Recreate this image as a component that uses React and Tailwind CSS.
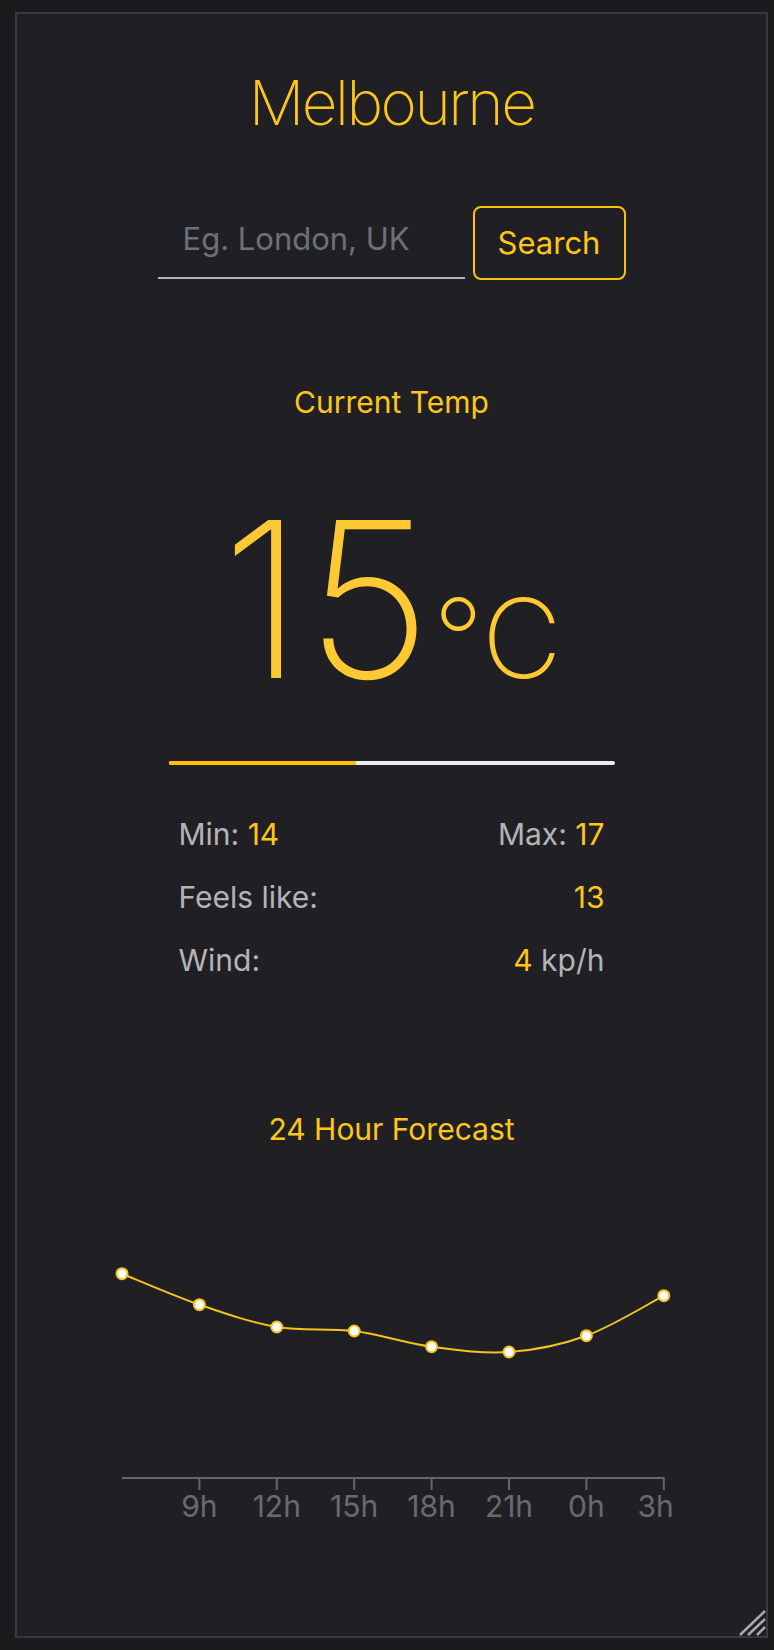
import React from 'react';

const stats = [
    { label: 'Min:', value: '14', right: { label: 'Max:', value: '17' } },
    { label: 'Feels like:', right: { value: '13' } },
    { label: 'Wind:', right: { value: '4', unit: 'kp/h' } },
];

// forecast points, already scaled to the chart box
const forecast = [
    { hour: '6h', y: 126.7 },
    { hour: '9h', y: 157.7 },
    { hour: '12h', y: 180 },
    { hour: '15h', y: 184 },
    { hour: '18h', y: 199.7 },
    { hour: '21h', y: 205 },
    { hour: '0h', y: 188.7 },
    { hour: '3h', y: 148.7 },
];

const X0 = 105;
const STEP = 77.4;

const smoothPath = (pts) => {
    let d = `M ${pts[0].x} ${pts[0].y}`;
    for (let i = 0; i < pts.length - 1; i++) {
        const p0 = pts[i - 1] || pts[i];
        const p1 = pts[i];
        const p2 = pts[i + 1];
        const p3 = pts[i + 2] || p2;
        const c1x = p1.x + (p2.x - p0.x) / 6;
        const c1y = p1.y + (p2.y - p0.y) / 6;
        const c2x = p2.x - (p3.x - p1.x) / 6;
        const c2y = p2.y - (p3.y - p1.y) / 6;
        d += ` C ${c1x} ${c1y}, ${c2x} ${c2y}, ${p2.x} ${p2.y}`;
    }
    return d;
};

const ForecastChart = () => {
    const pts = forecast.map((f, i) => ({ ...f, x: X0 + i * STEP }));
    const last = pts[pts.length - 1];
    return (
        <svg width="749" height="400" className="block">
            <path d={smoothPath(pts)} fill="none" stroke="#f7c21f" strokeWidth="2" />
            {pts.map(p => (
                <circle key={p.hour} cx={p.x} cy={p.y} r="5.5" fill="#ffffff" stroke="#f7c21f" strokeWidth="2" />
            ))}
            <line x1={X0} y1="331" x2={last.x + 1} y2="331" stroke="#666669" strokeWidth="2" />
            {pts.slice(1).map((p, i) => (
                <g key={p.hour}>
                    <line x1={p.x} y1="331" x2={p.x} y2="343" stroke="#666669" strokeWidth="2" />
                    <text
                        x={i === pts.length - 2 ? p.x + 10 : p.x}
                        y="370"
                        textAnchor={i === pts.length - 2 ? 'end' : 'middle'}
                        fill="#6a6a6d"
                        fontSize="30"
                        fontFamily="Inter, 'Noto Sans', sans-serif"
                    >
                        {p.hour}
                    </text>
                </g>
            ))}
        </svg>
    );
};

const App = () => {
    return (
        <div className="min-h-[1650px] bg-[#1b1b1e] pl-[15px] pt-[12px] font-[Inter,'Noto_Sans',sans-serif]">
            <div className="relative w-[753px] h-[1626px] border-2 border-[#3a3a3e] bg-[#202024] flex flex-col items-center pt-[58px]">
                <h1 className="text-[62px] leading-[62px] font-extralight tracking-[-2.5px] text-[#ffc61a]">Melbourne</h1>

                <div className="flex items-center gap-2 mt-[72px]">
                    <input
                        type="text"
                        placeholder="Eg. London, UK"
                        className="w-[307px] h-[72px] pl-[25px] pb-[7px] bg-transparent border-b-2 border-[#b4b4b6] text-[31px] text-gray-200 placeholder:text-[#6b7179] outline-none"
                    />
                    <button className="w-[153px] h-[74px] border-2 border-[#ffc107] rounded-lg text-[31px] text-[#ffc61a]">
                        Search
                    </button>
                </div>

                <h2 className="mt-[104px] text-[30px] leading-[36px] text-[#ffc61a]">Current Temp</h2>

                <div className="mt-[71px] leading-none text-[#ffc933] font-[160]">
                    <span className="text-[217px] tracking-[2px]">15</span>
                    <span className="text-[110px]">°C</span>
                </div>

                <div className="mt-[53px] w-[446px] h-[4px] rounded-full bg-[#ececee] flex">
                    <div className="w-[42%] h-full rounded-l-full bg-[#ffc107]" />
                </div>

                <div className="mt-[51px] w-[446px] px-[10px] flex flex-col gap-[27px] text-[30px] leading-[36px] text-[#b4b4b6]">
                    {stats.map(row => (
                        <div key={row.label} className="flex justify-between">
                            <span>
                                {row.label} {row.value && <span className="text-[#ffc61a]">{row.value}</span>}
                            </span>
                            <span>
                                {row.right.label && <>{row.right.label} </>}
                                <span className="text-[#ffc61a]">{row.right.value}</span>
                                {row.right.unit && <> {row.right.unit}</>}
                            </span>
                        </div>
                    ))}
                </div>

                <h2 className="mt-[133px] text-[30px] leading-[36px] text-[#ffc61a]">24 Hour Forecast</h2>

                <ForecastChart />

                <svg className="absolute right-0 bottom-0" width="27" height="26" viewBox="0 0 27 26">
                    <path d="M1 25 L26 1 M9 25 L26 9 M18 25 L26 17" stroke="#a9a9ab" strokeWidth="2.5" fill="none" />
                </svg>
            </div>
        </div>
    );
};

export default App;
